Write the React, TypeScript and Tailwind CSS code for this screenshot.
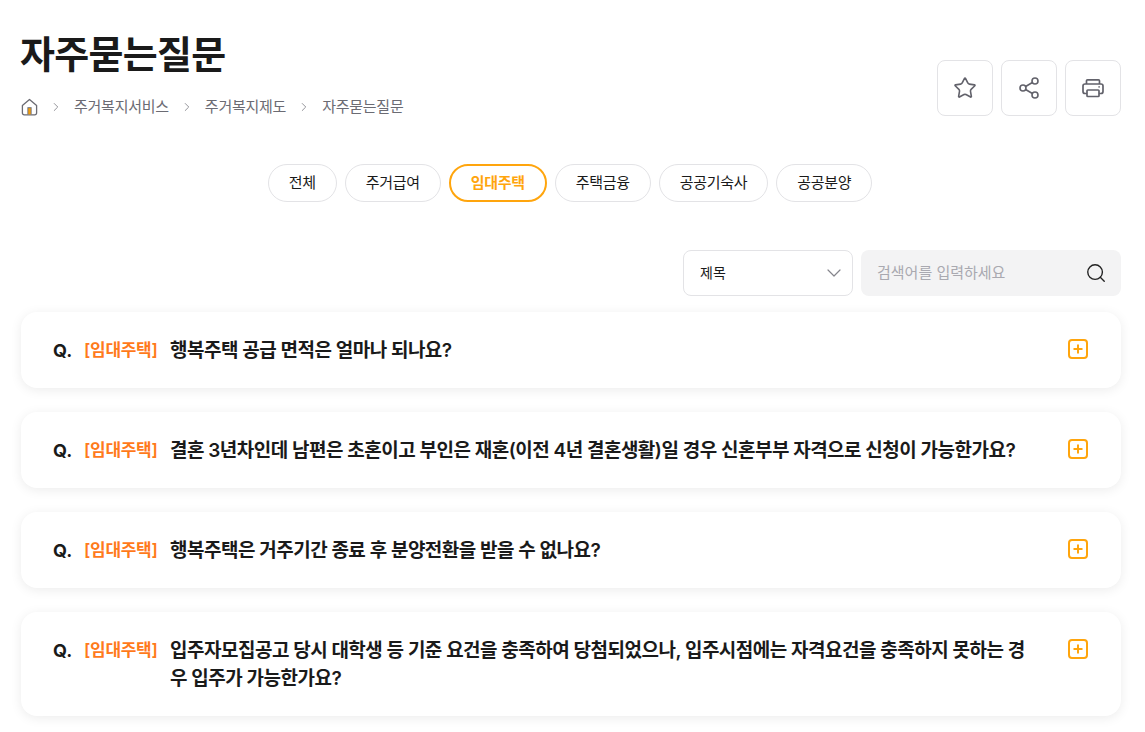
import { ChevronDown, ChevronRight, Search, Share2, Star } from 'lucide-react';

const tabs = ['전체', '주거급여', '임대주택', '주택금융', '공공기숙사', '공공분양'];

const questions = [
  '행복주택 공급 면적은 얼마나 되나요?',
  '결혼 3년차인데 남편은 초혼이고 부인은 재혼(이전 4년 결혼생활)일 경우 신혼부부 자격으로 신청이 가능한가요?',
  '행복주택은 거주기간 종료 후 분양전환을 받을 수 없나요?',
  '입주자모집공고 당시 대학생 등 기준 요건을 충족하여 당첨되었으나, 입주시점에는 자격요건을 충족하지 못하는 경우 입주가 가능한가요?',
];

const crumbs = ['주거복지서비스', '주거복지제도', '자주묻는질문'];

function HomeIcon() {
  return (
    <svg width="17" height="18" viewBox="0 0 17 18" fill="none">
      <path d="M1.4 7.4 8.5 1.4l7.1 6V15a1.8 1.8 0 0 1-1.8 1.8H3.2A1.8 1.8 0 0 1 1.4 15V7.4Z" stroke="#6b6b73" strokeWidth="1.3" strokeLinejoin="round" />
      <rect x="6.4" y="9.2" width="4.2" height="7.2" fill="#6b6b73" />
      <rect x="7.3" y="10.2" width="2.4" height="6.2" fill="#f59e0b" />
    </svg>
  );
}

function PrinterIcon() {
  return (
    <svg width="24" height="24" viewBox="0 0 24 24" fill="none" stroke="#62626b" strokeWidth="1.7">
      <path d="M5.5 8V4.8a1 1 0 0 1 1-1h11a1 1 0 0 1 1 1V8" />
      <path d="M6 17.5H4a2 2 0 0 1-2-2V10a2 2 0 0 1 2-2h16a2 2 0 0 1 2 2v5.5a2 2 0 0 1-2 2h-2" />
      <rect x="6" y="14" width="12" height="6.5" rx="0.8" />
      <path d="M17.5 10.8h1.2" />
    </svg>
  );
}

function PlusBox() {
  return (
    <svg width="22" height="22" viewBox="0 0 22 22" fill="none" stroke="#ffa50d" strokeWidth="2">
      <rect x="2" y="2" width="18" height="18" rx="3" />
      <path d="M11 6.5v9M6.5 11h9" />
    </svg>
  );
}

export default function App() {
  return (
    <div className="h-[732px] overflow-hidden bg-white pl-[21px] pr-[24px] pt-[27px] font-['Inter','Noto_Sans_CJK_KR',sans-serif] text-[#1a1a1a]">
      <div className="flex justify-between">
        <div>
          <h1 className="-ml-px text-[38px] font-bold leading-[54px] tracking-[-0.7px]">자주묻는질문</h1>
          <div className="mt-[8px] flex h-[36px] items-center text-[15px] text-[#6b6b73]">
            <HomeIcon />
            {crumbs.map((c) => (
              <div key={c} className="flex items-center">
                <ChevronRight className="mx-[11px] h-[14px] w-[14px] text-[#85858c]" strokeWidth={1.5} />
                <span className="tracking-[-0.25px]">{c}</span>
              </div>
            ))}
          </div>
        </div>
        <div className="mt-[33px] flex gap-2">
          <button className="flex h-[56px] w-[56px] items-center justify-center rounded-lg border border-[#e3e3e6] bg-white">
            <Star className="h-[24px] w-[24px] text-[#62626b]" strokeWidth={1.6} />
          </button>
          <button className="flex h-[56px] w-[56px] items-center justify-center rounded-lg border border-[#e3e3e6] bg-white">
            <Share2 className="h-[24px] w-[24px] text-[#62626b]" strokeWidth={1.6} />
          </button>
          <button className="flex h-[56px] w-[56px] items-center justify-center rounded-lg border border-[#e3e3e6] bg-white">
            <PrinterIcon />
          </button>
        </div>
      </div>

      <div className="mt-[39px] flex justify-center gap-2 pr-[2px]">
        {tabs.map((t) =>
          t === '임대주택' ? (
            <button key={t} className="flex h-[38px] items-center rounded-full border-2 border-[#ffa50d] px-5 text-[15px] font-bold tracking-[-0.3px] text-[#ffa50d]">
              {t}
            </button>
          ) : (
            <button key={t} className="flex h-[38px] items-center rounded-full border border-[#e3e3e6] px-5 text-[15px] tracking-[-0.3px]">
              {t}
            </button>
          ),
        )}
      </div>

      <div className="mt-[48px] flex justify-end gap-2">
        <div className="flex h-[46px] w-[170px] items-center justify-between rounded-lg border border-[#e3e3e6] pl-4 pr-[6px] text-[14px]">
          <span className="-mt-px">제목</span>
          <ChevronDown className="h-[24px] w-[24px] text-[#85858c]" strokeWidth={1.2} />
        </div>
        <div className="flex h-[46px] w-[260px] items-center justify-between rounded-lg bg-[#f3f3f4] pl-4 pr-[14px] text-[15px] text-[#a9a9b0]">
          <span>검색어를 입력하세요</span>
          <Search className="h-[22px] w-[22px] text-[#222]" strokeWidth={1.5} />
        </div>
      </div>

      <div className="mt-[16px] flex flex-col gap-6">
        {questions.map((q) => (
          <div key={q} className="flex rounded-[16px] bg-white py-6 pl-8 pr-[32px] shadow-[0_2px_12px_rgba(0,0,0,0.08)]">
            <span className="mt-px -mb-px w-[31px] shrink-0 text-[18px] font-bold leading-[28px]">Q.</span>
            <span className="w-[86px] shrink-0 text-[17px] font-semibold leading-[28px] tracking-[-0.3px] text-[#ff7a1a]">[임대주택]</span>
            <p className="mt-px -mb-px min-w-0 flex-1 break-all text-[19px] font-semibold leading-[28px] tracking-[-0.5px]">{q}</p>
            <div className="ml-[34px] flex h-[26px] w-[22px] shrink-0 items-center justify-center">
              <PlusBox />
            </div>
          </div>
        ))}
      </div>
    </div>
  );
}
